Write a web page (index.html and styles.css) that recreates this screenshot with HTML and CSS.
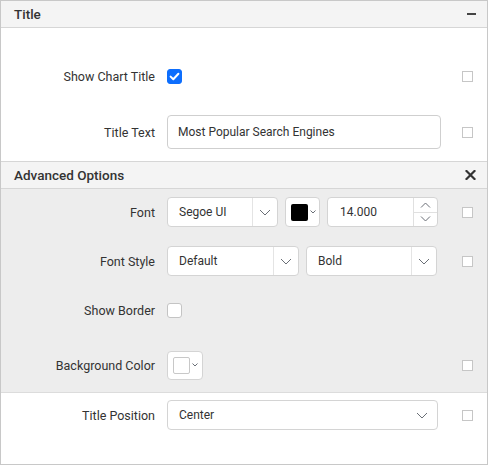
FILE: index.html
```html
<!DOCTYPE html>
<html>
<head>
<meta charset="utf-8">
<link rel="stylesheet" href="styles.css">
</head>
<body>
<div class="panel">
  <div class="sec-head first">
    <span>Title</span>
    <span class="minus"></span>
  </div>
  <div class="sec-body title-body">
    <div class="row">
      <label class="lbl">Show Chart Title</label>
      <div class="ctl"><span class="cb checked"><svg width="15" height="15" viewBox="0 0 15 15"><path d="M3.6 7.6 L6.3 10.2 L11.4 4.8" fill="none" stroke="#fff" stroke-width="2" stroke-linecap="round" stroke-linejoin="round"/></svg></span></div>
      <span class="mini"></span>
    </div>
    <div class="row">
      <label class="lbl">Title Text</label>
      <div class="ctl"><div class="textbox tall w274">Most Popular Search Engines</div></div>
      <span class="mini"></span>
    </div>
  </div>
  <div class="sec-head">
    <span>Advanced Options</span>
    <svg class="close" width="11" height="10" viewBox="0 0 11 10"><path d="M1.5 1 L9.5 9 M9.5 1 L1.5 9" stroke="#333" stroke-width="2.2" stroke-linecap="square"/></svg>
  </div>
  <div class="sec-body adv-body">
    <div class="row">
      <label class="lbl">Font</label>
      <div class="ctl">
        <div class="dd w111"><span class="val">Segoe UI</span><span class="btn"><svg width="12" height="7" viewBox="0 0 12 7"><path d="M1 1 L6 6 L11 1" fill="none" stroke="#6a6f76" stroke-width="1"/></svg></span></div>
        <div class="cp"><span class="sw black"></span><svg width="6" height="4" viewBox="0 0 6 4"><path d="M0.5 0.5 L3 3 L5.5 0.5" fill="none" stroke="#6a6f76" stroke-width="1"/></svg></div>
        <div class="num"><span class="val">14.000</span><span class="spin"><span class="up"><svg width="11" height="6" viewBox="0 0 11 6"><path d="M1 5.5 L5.5 1 L10 5.5" fill="none" stroke="#6a6f76" stroke-width="1"/></svg></span><span class="dn"><svg width="11" height="6" viewBox="0 0 11 6"><path d="M1 0.5 L5.5 5 L10 0.5" fill="none" stroke="#6a6f76" stroke-width="1"/></svg></span></span></div>
      </div>
      <span class="mini"></span>
    </div>
    <div class="row">
      <label class="lbl">Font Style</label>
      <div class="ctl">
        <div class="dd w132"><span class="val">Default</span><span class="btn"><svg width="12" height="7" viewBox="0 0 12 7"><path d="M1 1 L6 6 L11 1" fill="none" stroke="#6a6f76" stroke-width="1"/></svg></span></div>
        <div class="dd w131"><span class="val">Bold</span><span class="btn"><svg width="12" height="7" viewBox="0 0 12 7"><path d="M1 1 L6 6 L11 1" fill="none" stroke="#6a6f76" stroke-width="1"/></svg></span></div>
      </div>
      <span class="mini"></span>
    </div>
    <div class="row gap-lg">
      <label class="lbl">Show Border</label>
      <div class="ctl"><span class="cb"></span></div>
      <span></span>
    </div>
    <div class="row">
      <label class="lbl">Background Color</label>
      <div class="ctl"><div class="cp wide"><span class="sw white"></span><svg width="6" height="4" viewBox="0 0 6 4"><path d="M0.5 0.5 L3 3 L5.5 0.5" fill="none" stroke="#6a6f76" stroke-width="1"/></svg></div></div>
      <span class="mini"></span>
    </div>
  </div>
  <div class="sec-body pos-body">
    <div class="row">
      <label class="lbl">Title Position</label>
      <div class="ctl">
        <div class="dd w271 nodiv"><span class="val">Center</span><span class="btn"><svg width="12" height="7" viewBox="0 0 12 7"><path d="M1 1 L6 6 L11 1" fill="none" stroke="#6a6f76" stroke-width="1"/></svg></span></div>
      </div>
      <span class="mini"></span>
    </div>
  </div>
</div>
</body>
</html>
```
FILE: styles.css
```css
* { box-sizing: border-box; }
html, body { margin: 0; padding: 0; background: #fff; }
body { font-family: Roboto, "Liberation Sans", Arial, sans-serif; color: #333; font-size: 12px; }
.panel {
  width: 488px;
  height: 465px;
  border: 1px solid #c8c8c8;
  display: flex;
  flex-direction: column;
}
.sec-head {
  height: 28px;
  background: #f4f4f4;
  border-top: 1px solid #d6d6d6;
  border-bottom: 1px solid #d6d6d6;
  display: flex;
  align-items: center;
  justify-content: space-between;
  padding: 0 11px 0 13px;
  font-size: 13.5px;
  font-weight: 500;
  color: #333;
}
.sec-head.first { height: 27px; border-top: none; }
.minus { width: 9px; height: 1.5px; background: #444; }
.sec-body { display: flex; flex-direction: column; }
.title-body { height: 133px; padding-top: 31px; gap: 22px; }
.title-body .row { height: 34px; }
.adv-body { height: 204px; background: #ededed; padding-top: 8px; border-bottom: 1px solid #dcdcdc; gap: 19px; }
.adv-body .row { height: 30px; }
.adv-body .row.gap-lg { margin-bottom: 6px; }
.pos-body { padding-top: 7px; }
.pos-body .row { height: 30px; }
.row {
  display: grid;
  grid-template-columns: 154px 283px 11px;
  column-gap: 12px;
  align-items: center;
}
.lbl { text-align: right; color: #333; font-size: 12.5px; white-space: nowrap; }
.ctl { display: flex; align-items: center; gap: 7px; height: 100%; }
.mini { width: 11px; height: 11px; border: 1px solid #c6c6c6; background: #fff; display: block; }
.cb {
  width: 15px; height: 15px; border: 1px solid #c4c4c4; border-radius: 3px; background: #fff; display: block;
}
.cb.checked { background: #0d6efd; border-color: #0d6efd; }
.cb svg { display: block; margin: -1px; }
.textbox {
  border: 1px solid #cfcfcf; border-radius: 4px; background: #fff; display: flex; align-items: center; padding-left: 10px;
}
.tall { height: 34px; }
.w274 { width: 274px; }
.dd {
  height: 30px; border: 1px solid #d4d4d4; border-radius: 4px; background: #fff; display: flex; align-items: center;
}
.dd .val { flex: 1; padding-left: 11px; }
.dd .btn { width: 25px; height: 100%; border-left: 1px solid #e4e4e4; display: flex; align-items: center; justify-content: center; }
.dd.nodiv .btn { border-left: none; width: 30px; }
.w111 { width: 111px; }
.w132 { width: 132px; }
.w131 { width: 131px; }
.w271 { width: 271px; }
.cp {
  width: 35px; height: 30px; border: 1px solid #d4d4d4; border-radius: 4px; background: #fff; display: flex; align-items: center; padding-left: 5px; gap: 2px;
}
.cp.wide { width: 36px; height: 29px; }
.sw { width: 17px; height: 17px; border-radius: 2px; display: block; }
.sw.black { background: #000; }
.sw.white { background: #fff; border: 1px solid #c8c8c8; }
.num {
  width: 111px; height: 30px; border: 1px solid #d4d4d4; border-radius: 4px; background: #fff; display: flex; align-items: center;
}
.num .val { flex: 1; padding-left: 12px; }
.spin { width: 24px; height: 100%; border-left: 1px solid #e0e0e0; display: flex; flex-direction: column; }
.spin span { flex: 1; display: flex; align-items: center; justify-content: center; }
.spin .up { border-bottom: 1px solid #e0e0e0; }
```
